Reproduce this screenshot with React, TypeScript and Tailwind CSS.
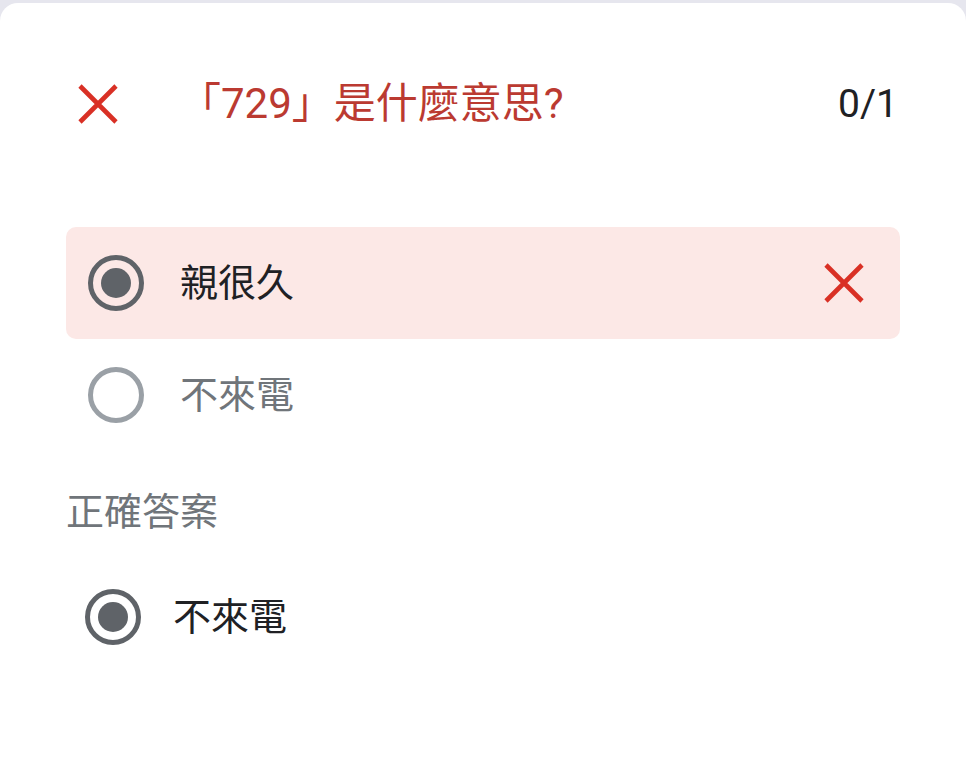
import React from "react";

const font = { fontFamily: "Roboto, 'Noto Sans CJK TC', sans-serif" };

function XIcon({ color = "#d93025" }: { color?: string }) {
  return (
    <svg width="40" height="40" viewBox="0 0 40 40" className="shrink-0">
      <path d="M2 2 L38 38 M38 2 L2 38" stroke={color} strokeWidth="4.6" strokeLinecap="butt" />
    </svg>
  );
}

function Radio({ checked, muted }: { checked?: boolean; muted?: boolean }) {
  return (
    <div
      className={
        "w-[56px] h-[56px] rounded-full border-[5px] flex items-center justify-center shrink-0 " +
        (muted ? "border-[#9aa0a6]" : "border-[#5f6368]")
      }
    >
      {checked && <div className="w-[30px] h-[30px] rounded-full bg-[#5f6368]" />}
    </div>
  );
}

export default function App() {
  return (
    <div className="w-[966px] h-[762px] bg-[#e6e6ee] pt-[3px] overflow-hidden" style={font}>
      <div className="h-full bg-white rounded-t-[18px] pt-[61px] px-[66px]">
        <div className="h-[80px] flex items-center pl-[12px] pr-[2px]">
          <XIcon />
          <div className="ml-[61px] text-[42px] leading-[48px] text-[#bb3a31] flex-1">「729」是什麼意思?</div>
          <div className="text-[39px] leading-[48px] text-[#202124]">0/1</div>
        </div>
        <div className="mt-[83px]">
          <div className="h-[112px] rounded-[10px] bg-[#fce8e6] flex items-center pl-[22px] pr-[36px]">
            <Radio checked />
            <div className="ml-[36px] text-[38px] leading-[48px] text-[#202124] flex-1">親很久</div>
            <XIcon />
          </div>
          <div className="h-[112px] flex items-center pl-[22px]">
            <Radio muted />
            <div className="ml-[36px] text-[38px] leading-[48px] text-[#70757a]">不來電</div>
          </div>
        </div>
        <div className="mt-[37px] text-[38px] leading-[48px] text-[#70757a]">正確答案</div>
        <div className="mt-[25px] h-[112px] flex items-center pl-[19px]">
          <Radio checked />
          <div className="ml-[32px] text-[38px] leading-[48px] text-[#202124]">不來電</div>
        </div>
      </div>
    </div>
  );
}
